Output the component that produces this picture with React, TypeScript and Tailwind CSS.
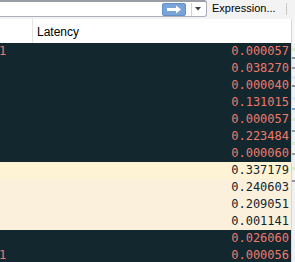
import React from "react";

type Row = { v: string; kind: "bad" | "y1" | "y2"; lead?: boolean };

const rows: Row[] = [
  { v: "0.000057", kind: "bad", lead: true },
  { v: "0.038270", kind: "bad" },
  { v: "0.000040", kind: "bad" },
  { v: "0.131015", kind: "bad" },
  { v: "0.000057", kind: "bad" },
  { v: "0.223484", kind: "bad" },
  { v: "0.000060", kind: "bad" },
  { v: "0.337179", kind: "y1" },
  { v: "0.240603", kind: "y2" },
  { v: "0.209051", kind: "y2" },
  { v: "0.001141", kind: "y2" },
  { v: "0.026060", kind: "bad" },
  { v: "0.000056", kind: "bad", lead: true },
];

const marks: { h: number; c: string }[] = [
  { h: 5, c: "#eef3ee" },
  { h: 3, c: "#d8ecc8" },
  { h: 6, c: "#f2f4f6" },
  { h: 2, c: "#8f979b" },
  { h: 8, c: "#eef1f3" },
  { h: 2, c: "#9aa1a5" },
  { h: 7, c: "#f4f4f8" },
  { h: 3, c: "#e4e0f0" },
  { h: 6, c: "#f0f2f4" },
  { h: 2, c: "#8c9498" },
  { h: 10, c: "#eef2f4" },
  { h: 3, c: "#dde8f6" },
  { h: 8, c: "#f2f4f6" },
  { h: 2, c: "#7aa6d8" },
  { h: 8, c: "#eef1f3" },
  { h: 3, c: "#dcebcc" },
  { h: 9, c: "#f2f3f5" },
  { h: 2, c: "#959ca0" },
  { h: 10, c: "#eef2f4" },
  { h: 3, c: "#d8ecc8" },
  { h: 8, c: "#f2f4f6" },
  { h: 2, c: "#9aa1a5" },
  { h: 12, c: "#eef1f3" },
  { h: 3, c: "#d8ecc8" },
  { h: 10, c: "#f2f4f6" },
  { h: 2, c: "#8f979b" },
  { h: 40, c: "#eef1f3" },
];

export default function App() {
  return (
    <div
      className="w-[295px] h-[262px] overflow-hidden bg-[#f0f0f0] flex flex-col"
      style={{ fontFamily: '"Liberation Sans", Arial, sans-serif' }}
    >
      {/* toolbar */}
      <div className="h-[19px] shrink-0 flex items-start bg-[#f3f3f3]">
        <div className="w-[209px] -ml-[2px] h-[17px] border border-[#a9b0b8] border-t-2 border-t-[#9a9fa5] rounded-r-[3px] bg-white flex items-center justify-end pr-[3px] shrink-0">
          <div className="w-[24px] h-[13px] rounded-[2px] bg-[#78a4d8] border border-[#6290c8] flex items-center justify-center">
            <svg width="16" height="9" viewBox="0 0 16 9">
              <path d="M1 3h9V0.5L15 4.5 10 8.5V6H1z" fill="#ffffff" />
            </svg>
          </div>
          <div className="w-[1px] h-[13px] bg-[#d0d4d8] ml-[5px]" />
          <svg width="9" height="6" viewBox="0 0 9 6" className="ml-[2px]">
            <path d="M1 1h6L4 4.5z" fill="#404040" />
          </svg>
        </div>
        <div className="ml-[5px] h-[17px] flex items-center text-[11px] text-[#000] whitespace-nowrap">
          Expression...
        </div>
        <div className="ml-[10px] mt-[3px] w-[1px] h-[12px] bg-[#c8c8c8] shrink-0" />
        <div className="ml-[8px] mt-[8px] w-[3px] h-[1px] bg-[#303030] shrink-0" />
      </div>
      {/* table */}
      <div className="flex-1 flex min-h-0">
        <div className="flex-1 flex flex-col min-w-0">
          <div className="h-[24px] shrink-0 bg-white flex items-center text-[12px] text-[#000]">
            <div className="w-[33px] h-full border-r border-[#e4e4e4] shrink-0" />
            <div className="pl-[4px] pt-[2px]">Latency</div>
          </div>
          <div
            className="flex flex-col"
            style={{ fontFamily: '"DejaVu Sans Mono", monospace' }}
          >
            {rows.map((r, i) => {
              const bg =
                r.kind === "bad"
                  ? "bg-[#12272e] text-[#f07a6c]"
                  : r.kind === "y1"
                  ? "bg-[#fff3d6] text-[#12272e]"
                  : "bg-[#faf0dc] text-[#12272e]";
              return (
                <div
                  key={i}
                  className={`h-[17px] shrink-0 flex items-center text-[12px] leading-[17px] ${bg}`}
                >
                  <div className="w-[33px] shrink-0 overflow-hidden">
                    {r.lead ? <span className="block -ml-[1px]">1</span> : null}
                  </div>
                  <div className="flex-1 text-right pr-[2px]">{r.v}</div>
                </div>
              );
            })}
          </div>
        </div>
        <div className="w-[4px] shrink-0 flex flex-col border-l border-[#d4d8dc] bg-[#eef1f3]">
          <div className="h-[24px] shrink-0 bg-[#f6f6f6]" />
          {marks.map((m, i) => (
            <div key={i} className="shrink-0" style={{ height: m.h, backgroundColor: m.c }} />
          ))}
        </div>
      </div>
    </div>
  );
}
